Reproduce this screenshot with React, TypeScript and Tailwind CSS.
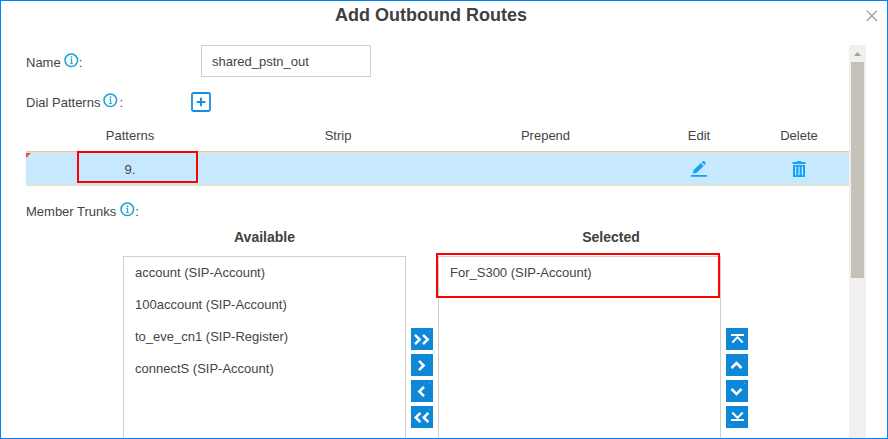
import type { ReactNode } from "react";

function Info({ className = "" }: { className?: string }) {
  return (
    <svg className={`h-[15px] w-[15px] shrink-0 ${className}`} viewBox="0 0 15 15" fill="none">
      <circle cx="7.3" cy="7.3" r="6.3" stroke="#1ba3d6" strokeWidth="1.5" />
      <path d="M6.2 6.2H7.6V10.3M6.2 10.5H8.8" stroke="#1ba3d6" strokeWidth="1.1" />
      <path d="M7.5 3.4V5" stroke="#1ba3d6" strokeWidth="1.5" />
    </svg>
  );
}

function MoveButton({ children, dot }: { children: ReactNode; dot: "top" | "bottom" }) {
  return (
    <button className="block h-[22px] w-[22px] bg-[#0e88d6]">
      <svg viewBox="0 0 22 22" className="h-[22px] w-[22px]" fill="none" stroke="#fff" strokeWidth="2.5">
        {children}
        <rect
          x={dot === "bottom" ? 3 : 18}
          y={dot === "bottom" ? 18 : 3}
          width="1"
          height="1"
          fill="#5bb4e8"
          stroke="none"
        />
      </svg>
    </button>
  );
}

const trunks = [
  "account (SIP-Account)",
  "100account (SIP-Account)",
  "to_eve_cn1 (SIP-Register)",
  "connectS (SIP-Account)",
];

const columns = "grid grid-cols-[208px_208px_207px_100px_100px] text-center";

export default function App() {
  return (
    <div className="flex h-[439px] w-[888px] flex-col overflow-hidden border border-[#0080ff] bg-white font-['Liberation_Sans',Arial,sans-serif] text-[13px] leading-4 text-[#444]">
      <header className="relative h-11 shrink-0">
        <h1 className="pl-[334px] pt-[3px] text-[18px] font-bold leading-[22px] text-[#404040]">Add Outbound Routes</h1>
        <svg className="absolute left-[865px] top-[9px] h-3 w-3" viewBox="0 0 12 12" fill="none">
          <path d="M.7.7L11 11M11 .7L.7 11" stroke="#96968f" strokeWidth="1.1" />
        </svg>
      </header>

      <div className="flex min-h-0 flex-1">
        <main className="w-[848px] shrink-0 overflow-hidden pl-[25px]">
          <div className="flex h-8">
            <label className="flex w-[175px] pt-[10px]">
              Name
              <Info className="-mt-[2px] ml-[3px]" />:
            </label>
            <div className="h-8 w-[170px] border border-[#d0cfca] pl-[10px] pt-[8px]">shared_pstn_out</div>
          </div>

          <div className="flex h-[41px] pt-[15px]">
            <label className="flex w-[165px] pt-[3px]">
              Dial Patterns
              <Info className="-mt-[2px] ml-[3px]" />
              <span className="ml-[1px]">:</span>
            </label>
            <svg className="h-5 w-5" viewBox="0 0 20 20" fill="none" stroke="#1590dc">
              <rect x="1" y="1" width="18" height="18" rx="1.5" strokeWidth="1.8" />
              <path d="M10 5.7V14.3M5.7 10H14.3" strokeWidth="2" />
            </svg>
          </div>

          <div className={`${columns} h-[33px] pt-[10px]`}>
            <span>Patterns</span>
            <span>Strip</span>
            <span>Prepend</span>
            <span>Edit</span>
            <span>Delete</span>
          </div>
          <div className="relative border-t border-[#c9ced4]">
            <div className={`${columns} h-[34px] border-y border-[#fbe0a5] bg-[#c7e9ff] pt-[8px]`}>
              <span className="pt-px">9.</span>
              <span />
              <span />
              <svg className="mx-auto h-4 w-4" viewBox="0 0 16 16">
                <path d="M0 14H16V15.8H0Z" fill="#14a2f8" />
                <path d="M1.8 12.5L2.7 9.1L9.8 2L12.7 4.9L5.4 12Z" fill="#14a2f8" />
                <path d="M10.7 1.3L12 .1Q13 -.1 13.7.6L14.4 1.4Q14.8 2.2 14.3 2.9L13.3 4Z" fill="#14a2f8" />
              </svg>
              <svg className="mx-auto h-4 w-[14px]" viewBox="0 0 14 16" fill="#14a2f8">
                <path d="M.5 1H5V0H9V1H13.5V3H.5Z" />
                <path d="M1 4H13V16H1Z" />
                <path d="M3 5.5H4.2V14.3H3ZM6.4 5.5H7.6V14.3H6.4ZM9.8 5.5H11V14.3H9.8Z" fill="#c7e9ff" />
              </svg>
            </div>
            <svg className="absolute left-0 top-[1px] h-[5px] w-[5px]" viewBox="0 0 5 5">
              <path d="M0 0H5L0 5Z" fill="#ed4b2a" />
            </svg>
            <div className="absolute -top-px left-[51px] h-8 w-[121px] border-2 border-[#f00]" />
          </div>

          <div className="flex h-[43px] pt-[18px]">
            Member Trunks
            <Info className="-mt-[2px] ml-[4px]" />:
          </div>

          <div className="ml-[97px] grid grid-cols-[283px_32px_283px_5px_22px]">
            <h2 className="h-[27px] text-center text-[14px] font-bold text-[#404040]">Available</h2>
            <span />
            <h2 className="pl-[63px] text-center text-[14px] font-bold text-[#404040]">Selected</h2>
            <span />
            <span />
            <div className="h-[240px] border border-[#d0d0ce] pl-[11px]">
              {trunks.map((trunk) => (
                <div key={trunk} className="h-8 pt-[8px]">
                  {trunk}
                </div>
              ))}
            </div>
            <div className="flex flex-col gap-1 pl-[5px] pt-[72px]">
              <MoveButton dot="top">
                <path d="M4 6.8L8.7 11.5L4 16.2M12 6.8L16.7 11.5L12 16.2" />
              </MoveButton>
              <MoveButton dot="top">
                <path d="M8 6.8L12.7 11.5L8 16.2" />
              </MoveButton>
              <MoveButton dot="top">
                <path d="M13 6.8L8.3 11.5L13 16.2" />
              </MoveButton>
              <MoveButton dot="top">
                <path d="M9.4 6.8L4.7 11.5L9.4 16.2M17.4 6.8L12.7 11.5L17.4 16.2" />
              </MoveButton>
            </div>
            <div className="relative h-[240px] border border-[#d0cfca] pl-[11px] pt-[8px]">
              For_S300 (SIP-Account)
              <div className="absolute -left-[3px] -top-1 h-[45px] w-[284px] border-2 border-[#f00]" />
            </div>
            <span />
            <div className="flex flex-col gap-1 pt-[72px]">
              <MoveButton dot="bottom">
                <path d="M5 7H18" strokeWidth="2" />
                <path d="M6.3 14.5L11.5 9.1L16.7 14.5" strokeWidth="2" />
              </MoveButton>
              <MoveButton dot="top">
                <path d="M5.5 14L10.5 9L15.5 14" />
              </MoveButton>
              <MoveButton dot="top">
                <path d="M5.5 9L10.5 14L15.5 9" />
              </MoveButton>
              <MoveButton dot="bottom">
                <path d="M5 14H18" strokeWidth="2" />
                <path d="M6.3 6.5L11.5 11.9L16.7 6.5" strokeWidth="2" />
              </MoveButton>
            </div>
          </div>
        </main>

        <div className="w-[17px] shrink-0 bg-[#f1f0ee] px-[2px]">
          <div className="flex h-[17px] justify-center pt-[7px]">
            <svg className="h-[4px] w-[7px]" viewBox="0 0 7 4">
              <path d="M3.5 0L7 4H0Z" fill="#a3a29f" />
            </svg>
          </div>
          <div className="h-[216px] bg-[#c5c2ba]" />
        </div>
      </div>
    </div>
  );
}
